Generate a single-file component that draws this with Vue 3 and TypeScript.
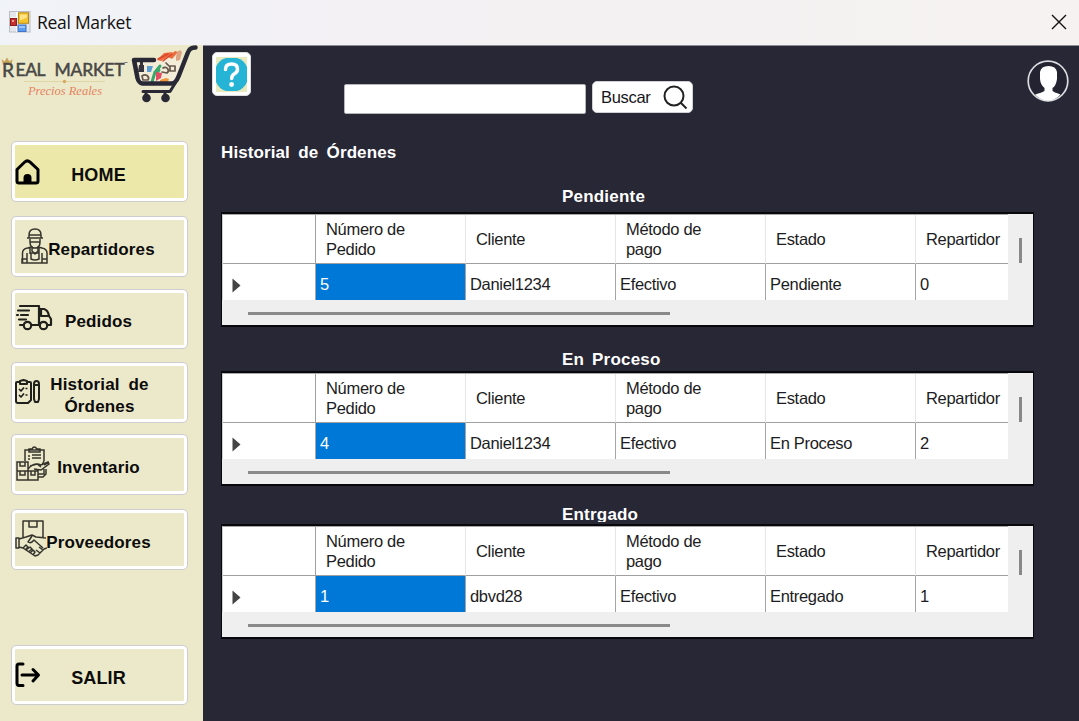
<script setup lang="ts">
interface MenuItem {
  id: string
  label: string
}

interface OrderSection {
  title: string
  key: string
  values: string[]
}

const menu: MenuItem[] = [
  { id: 'home', label: 'HOME' },
  { id: 'drivers', label: 'Repartidores' },
  { id: 'orders', label: 'Pedidos' },
  { id: 'history', label: 'Historial de Órdenes' },
  { id: 'stock', label: 'Inventario' },
  { id: 'suppliers', label: 'Proveedores' },
  { id: 'exit', label: 'SALIR' },
]

const columns: string[] = ['Número de Pedido', 'Cliente', 'Método de pago', 'Estado', 'Repartidor']

const sections: OrderSection[] = [
  { key: 'pending', title: 'Pendiente', values: ['5', 'Daniel1234', 'Efectivo', 'Pendiente', '0'] },
  { key: 'progress', title: 'En Proceso', values: ['4', 'Daniel1234', 'Efectivo', 'En Proceso', '2'] },
  { key: 'delivered', title: 'Entrgado', values: ['1', 'dbvd28', 'Efectivo', 'Entregado', '1'] },
]
</script>

<template>
  <div class="window">
    <header class="titlebar">
      <svg class="app-icon" width="22" height="22" viewBox="0 0 22 22">
        <rect x=".5" y=".5" width="20.500" height="20.500" fill="#e4e6ea" stroke="#b9bdc4" />
        <path d="M1 14.500h7M8 15v6M1 7h7M8 1v6" stroke="#fff" stroke-width="1.500" />
        <rect x="1.500" y="7.500" width="6" height="7" fill="#c4312c" stroke="#8e1c1a" />
        <rect x="3" y="9" width="2" height="2" fill="#f0a09a" />
        <rect x="9.500" y="1.800" width="10" height="10.500" fill="#f5c32c" stroke="#b98a12" />
        <path d="M11 3.500h7v3l-7 3z" fill="#fde48a" />
        <rect x="9" y="14" width="8" height="6.500" fill="#5b9bf0" stroke="#3f74c8" />
        <path d="M10 15h6v2h-6z" fill="#9cc6fb" />
      </svg>
      <span class="app-name">Real Market</span>
      <svg class="close" width="16" height="16" viewBox="0 0 16 16">
        <path d="M1 1l14 14M15 1L1 15" stroke="#111" stroke-width="1.400" fill="none" />
      </svg>
    </header>

    <div class="body">
      <aside class="sidebar">
        <svg class="logo" width="203" height="62" viewBox="0 45 203 62">
          <path d="M3 65l-1.500-6 3 2.500L7 57.500l2.500 4 3-2.500-1 6z" fill="#c9a35a" />
          <text x="2" y="76.500" class="brand" font-size="19.500" textLength="12" lengthAdjust="spacingAndGlyphs">R</text>
          <text x="15.500" y="76" class="brand" font-size="17.500" textLength="30" lengthAdjust="spacing">EAL</text>
          <text x="54.500" y="76" class="brand" font-size="17.500" textLength="70" lengthAdjust="spacing">MARKET</text>
          <path d="M124.500 62.500h3" stroke="#777" />
          <path d="M24 81.500h81" stroke="#e2d5a4" />
          <circle cx="64.500" cy="81.500" r="1.700" fill="#d9a860" />
          <text x="28" y="94.500" class="tagline" font-size="13" textLength="74" lengthAdjust="spacingAndGlyphs">Precios Reales</text>
          <g stroke-linecap="round" stroke-linejoin="round">
            <path d="M137 62l17-3 25-1 4 2-7 22-3 4-32-2z" fill="#f3ecd9" />
            <path d="M157 60l7-7 9-1-5 5-7 4zM168 57l7-6 3 1-6 7z" fill="#ee6c3e" />
            <path d="M158 59l10-5M163 61l9-7" stroke="#d9482d" stroke-width="1.500" />
            <path d="M176 57l1-5 3-2 2 2-2 8-4 1z" fill="#dca483" />
            <path d="M160 66l-4 5 3-1-2 3M155 72l-3 10" stroke="#39a66b" stroke-width="3" fill="none" />
            <path d="M156 72l6 1-1 5-5 3z" fill="#e34e62" />
            <path d="M160 80l6-2 3 1-1 3h-8z" fill="#f1933b" />
            <path d="M139 65h5v7h-6zM140 62h3v3h-3z" fill="#36353e" />
            <path d="M147 66h6l-2 6h-4z" fill="#5a9ed4" />
            <path d="M142 76c4-3 8 1 6 4h-5zM163 68a3 3 0 1 1 4 5l-5-1M170 66h5v5h-5zM166 63l3 3" fill="none" stroke="#66584c" stroke-width="1.700" />
            <path d="M154 60h-20l3.500 18c1 4 2 5 5 5.500h29c3 0 5-2 7-7l9-23c1.500-4 3-6 8-6" fill="none" stroke="#292936" stroke-width="4.500" />
            <path d="M143 91.500h27l5-8M146 92v5M165 92v5" fill="none" stroke="#292936" stroke-width="3" />
            <circle cx="146.500" cy="98" r="4.300" fill="#292936" />
            <circle cx="165.500" cy="98" r="4.300" fill="#292936" />
          </g>
        </svg>

        <nav class="menu">
          <button v-for="item in menu" :key="item.id" type="button" class="item" :class="item.id">
            <svg v-if="item.id === 'home'" class="icon" width="25" height="26" viewBox="0 0 25 26">
              <path d="M2 10.500 9.500 3.200q2.800-2.700 5.600 0L23 10.500V22q0 2-2 2H4q-2 0-2-2z" fill="none" stroke="#000" stroke-width="3" stroke-linejoin="round" />
              <path d="M8.500 24v-5q0-4 4-4t4 4v5z" fill="#000" />
            </svg>
            <svg v-else-if="item.id === 'drivers'" class="icon" width="27" height="36" viewBox="0 0 27 36" fill="none" stroke="#34342c" stroke-width="1.500">
              <path d="M8 7q0-6 6-6t6 6v3H8zM6 10h16M8 7h12M9 11v3q0 6 5 6t5-6v-3M9 14h10M11 18v5l3 3 3-3v-5" />
              <path d="M1.500 35V25q0-4 5-5l4-1M26 35V25q0-4-5-5l-4-1M1 31h5v4H1zM21 31h5v4h-5zM6 25v10M21 25v10M6 35h15M10 25h8v6q-4 2-8 0zM9 20v6M18 20v6" />
            </svg>
            <svg v-else-if="item.id === 'orders'" class="icon" width="37" height="27" viewBox="0 0 37 27" fill="none" stroke="#20201c" stroke-width="2.200" stroke-linecap="round" stroke-linejoin="round">
              <path d="M4 2h19v19H16M23 5h5q4 1 5 7l2 3v6h-4M4 21h3M24 21h-2M2 6.500h11M5 11h7M1 11h1M3 15.500h7" />
              <path d="M25 5v7h8" />
              <circle cx="11.500" cy="21.500" r="3.700" /><circle cx="27.500" cy="21.500" r="3.700" />
            </svg>
            <svg v-else-if="item.id === 'history'" class="icon" width="26" height="26" viewBox="0 0 26 26" fill="none" stroke="#20201c" stroke-width="2" stroke-linejoin="round">
              <path d="M5 3H2q-1 0-1 1v18q0 2 2 2h10l3-3V4q0-1-1-1h-3M5 2l3.500-1L12 2v3H5zM19 5q0-3 2.500-3T24 5v15l-1 3h-3l-1-3zM19 6h5" />
              <path d="M4 10l2 2 3-3.500M4 16l2 2 3-3.500M10.500 9.500h2M10.500 16h2" stroke-width="1.700" />
            </svg>
            <svg v-else-if="item.id === 'stock'" class="icon" width="34" height="36" viewBox="0 0 34 36" fill="none" stroke="#34342c" stroke-width="1.500">
              <path d="M9 15V4h19v11M13 6V3h3q2-4 5 0h3v3zM12 10h2M16 9h9M12 13h2M16 12h9M9 4h4M28 15l-2 4" />
              <path d="M1 16h11v9H1zM1 25h11v9H1zM12 25h10v9H12zM4 16v4h5v-4M4 25v4h5v-4M15 25v4h4v-4M12 23q6-7 13-4l7-3 1 2-8 6-7-1M22 28h6v-5M22 31h5l3-3v-5M14 20l7-2 4 3M28 19l5-3" />
            </svg>
            <svg v-else-if="item.id === 'suppliers'" class="icon" width="32" height="37" viewBox="0 0 32 37" fill="none" stroke="#34342c" stroke-width="1.500" stroke-linejoin="round">
              <path d="M8 17V1h20v17M14 1v6h8V1M1 18h3v10H1zM4 19l7-2 6-2 4 2 10 1M4 27l4 1 12 8 3-1 2-2 4-4 3-1M17 16l-4 6q3 2 6-2l9 8M8 28l3-3 2 2-3 3M11 30l4-3 2 2-4 3M15 33l3-3 2 2-2 3M21 30l4 3M24 27l4 3" />
            </svg>
            <svg v-else class="icon" width="26" height="26" viewBox="0 0 26 26" fill="none" stroke="#000" stroke-width="3" stroke-linecap="round" stroke-linejoin="round">
              <path d="M8 2H4Q2 2 2 4v17q0 2.500 2 2.500h4M7 13h16M18 7.500l5.500 5.500-5.500 6" />
            </svg>
            <span class="label">{{ item.label }}</span>
          </button>
        </nav>
      </aside>

      <main class="content">
        <div class="toolbar">
          <button type="button" class="help" aria-label="Ayuda">
            <svg width="31" height="35" viewBox="0 0 31 35">
              <rect width="31" height="35" fill="#e8e9bd" />
              <path d="M10 1h11q7 2 10 9v15q-3 7-10 9H10q-7-2-10-9V10q3-7 10-9z" fill="#25b3d6" />
              <path d="M9.500 12.500q0-5.500 6-5.500t6 5.200q0 3-3.300 4.800-2.500 1.400-2.500 4.500" fill="none" stroke="#fff" stroke-width="3.500" stroke-linecap="round" />
              <circle cx="15.600" cy="27.500" r="2.400" fill="#fff" />
            </svg>
          </button>
          <input class="search" type="text" aria-label="Buscar orden" />
          <button type="button" class="find">
            <span>Buscar</span>
            <svg width="25" height="25" viewBox="0 0 25 25" fill="none" stroke="#222" stroke-width="2">
              <circle cx="11" cy="11" r="9.500" /><path d="M17.500 17.500l6 6" />
            </svg>
          </button>
          <svg class="avatar" width="42" height="42" viewBox="0 0 42 42">
            <circle cx="21" cy="21" r="19.800" fill="#232331" stroke="#dcdce2" stroke-width="1.700" />
            <path d="M13 12q1-6 8.500-6T30 12v7q-1 7-4.500 9v3q1 1 8 3.500-5 6-12.500 6T8 34.500q7-2 9.500-3.500v-3Q13.500 25 13 19z" fill="#fff" />
          </svg>
        </div>

        <h1 class="heading">Historial de Órdenes</h1>

        <section v-for="section in sections" :key="section.key" class="section" :class="section.key">
          <h2 class="caption">{{ section.title }}</h2>
          <div class="grid-box">
            <div class="grid">
              <div class="cell head corner"></div>
              <div v-for="column in columns" :key="column" class="cell head"><span>{{ column }}</span></div>
              <div class="cell marker">
                <svg width="9" height="15" viewBox="0 0 9 15"><path d="M.5.500l8 7-8 7z" fill="#444" /></svg>
              </div>
              <div v-for="(value, index) in section.values" :key="index" class="cell value" :class="{ selected: index === 0 }">
                {{ value }}
              </div>
            </div>
            <div class="vbar"><i></i></div>
            <div class="hbar"><i></i></div>
          </div>
        </section>
      </main>
    </div>
  </div>
</template>

<style>
body {
  margin: 0;
  overflow: hidden;
}
</style>

<style scoped>
* {
  box-sizing: border-box;
}

.window {
  width: 1079px;
  height: 721px;
  display: flex;
  flex-direction: column;
  background: #282735;
  font-family: "Liberation Sans", Arial, sans-serif;
  overflow: hidden;
}

.titlebar {
  height: 45px;
  flex: none;
  display: flex;
  align-items: center;
  padding: 0 12px 2px 9px;
  background: linear-gradient(90deg, #f0f3f8, #f4f1f4 35%, #f5f2f1);
}

.app-name {
  margin-left: 6px;
  font: 17.500px "Open Sans", "Noto Sans", sans-serif;
  letter-spacing: -0.28px;
  color: #111;
  white-space: nowrap;
}

.close {
  margin-left: auto;
}

.body {
  flex: 1;
  display: flex;
  min-height: 0;
}

.sidebar {
  width: 203px;
  flex: none;
  background: #ece9ca;
}

.logo {
  display: block;
}

.brand {
  font-family: Lato, sans-serif;
  font-weight: 400;
  fill: #484746;
  stroke: #484746;
  stroke-width: 0.5px;
}

.tagline {
  font-family: "Liberation Serif", serif;
  font-style: italic;
  fill: #e58461;
}

.menu {
  display: flex;
  flex-direction: column;
  padding: 34px 0 0 11px;
}

.item {
  position: relative;
  width: 177px;
  height: 61px;
  margin: 0 0 12px;
  padding: 6px 0 0;
  display: flex;
  align-items: center;
  justify-content: center;
  border: 1px solid #cdcdd0;
  border-radius: 5px;
  background: #ece9ca;
  box-shadow: inset 0 0 0 3px #fff;
  font: bold 17px/22px "Liberation Sans", Arial, sans-serif;
  letter-spacing: 0.15px;
  color: #0c0c0c;
}

.item .icon {
  position: absolute;
  left: 3px;
  top: 17px;
}

.item .label {
  position: relative;
  left: -1px;
  white-space: nowrap;
}

.home {
  background: #ebe8a9;
  margin-bottom: 14px;
  font-size: 18px;
}

.drivers .icon {
  left: 9px;
  top: 11px;
}

.item.drivers .label {
  left: 2px;
}

.orders {
  margin-bottom: 13px;
  height: 60px;
}

.orders .icon {
  left: 4px;
  top: 14px;
}

.history .icon {
  top: 16px;
}

.item.history .label {
  left: 0;
  width: 100px;
  white-space: normal;
  word-spacing: 4px;
  line-height: 22px;
}

.history {
  margin-bottom: 11px;
}

.stock {
  margin-bottom: 14px;
}

.stock .icon {
  left: 4px;
  top: 11px;
}

.suppliers {
  margin-bottom: 75px;
}

.suppliers .icon {
  left: 3px;
  top: 10px;
}

.exit {
  height: 60px;
  margin-bottom: 0;
  font-size: 18px;
}

.exit .icon {
  top: 16px;
}

.content {
  flex: 1;
  border-top: 1px solid #8d8c94;
  padding-left: 18px;
  display: flex;
  flex-direction: column;
}

.toolbar {
  height: 94px;
  display: flex;
  align-items: flex-start;
  margin-left: -9px;
}

.help {
  width: 39px;
  height: 44px;
  margin: 6px 93px 0 0;
  padding: 0;
  display: flex;
  align-items: center;
  justify-content: center;
  border: 1px solid #dcdce0;
  border-radius: 5px;
  background: #fff;
}

.search {
  width: 242px;
  height: 30px;
  margin: 38px 6px 0 0;
  border: 1px solid #b5b5ba;
  border-radius: 2px;
  background: #fff;
}

.find {
  width: 101px;
  height: 32px;
  margin-top: 35px;
  padding: 0 4px 0 8px;
  display: flex;
  align-items: center;
  justify-content: space-between;
  border: 1px solid #cfcfd4;
  border-radius: 5px;
  background: #fff;
  font: 16.500px "Liberation Sans", Arial, sans-serif;
  letter-spacing: -0.3px;
  color: #15151c;
}

.avatar {
  margin: 14px 10px 0 auto;
}

.heading {
  height: 26px;
  margin: 0;
  font-size: 17px;
  line-height: 26px;
  letter-spacing: 0.1px;
  word-spacing: 3.500px;
  color: #fff;
}

.section {
  width: 813px;
}

.pending {
  padding-top: 19px;
}

.progress {
  padding-top: 21px;
}

.delivered {
  padding-top: 17px;
}

.caption {
  height: 23px;
  margin: 0 0 0 341px;
  overflow: hidden;
  font-size: 17px;
  line-height: 24px;
  letter-spacing: 0.2px;
  word-spacing: 3px;
  color: #fff;
}

.pending .caption {
  height: 27px;
}

.delivered .caption {
  height: 19px;
  margin-bottom: 2px;
}

.grid-box {
  height: 115px;
  display: grid;
  grid-template: 86px 25px / 786px 25px;
  border: 1px solid #08080c;
  border-width: 2px 1px;
  background: #efefef;
}

.grid {
  display: grid;
  grid-template: 49px 36px / 92.500px repeat(4, 150px) 93px;
  background: #fff;
  border-top: 1px solid #a8a8a8;
  border-left: 1px solid #d0d0d0;
  overflow: hidden;
}

.cell {
  display: flex;
  align-items: center;
  font-size: 16.500px;
  letter-spacing: -0.32px;
  color: #1c1c22;
  border-right: 1px solid #a5a5a5;
}

.head {
  padding-left: 10.500px;
  line-height: 20px;
  border-right-color: #e6e6e6;
  border-bottom: 1px solid #a0a0a0;
}

.head span {
  width: 86px;
}

.corner {
  border-right-color: #a0a0a0;
}

.marker {
  padding: 7px 0 0 9px;
}

.value {
  padding: 5px 0 0 4.500px;
}

.value:last-child,
.head:nth-child(6) {
  border-right: 0;
}

.selected {
  background: #0078d7;
  color: #fff;
}

.vbar {
  padding: 24px 0 0 11px;
}

.vbar i {
  display: block;
  width: 3px;
  height: 25px;
  background: #888;
}

.hbar {
  grid-column: 1 / 3;
  padding: 12px 0 0 26px;
}

.hbar i {
  display: block;
  width: 422px;
  height: 3px;
  background: #8a8a8a;
}
</style>
